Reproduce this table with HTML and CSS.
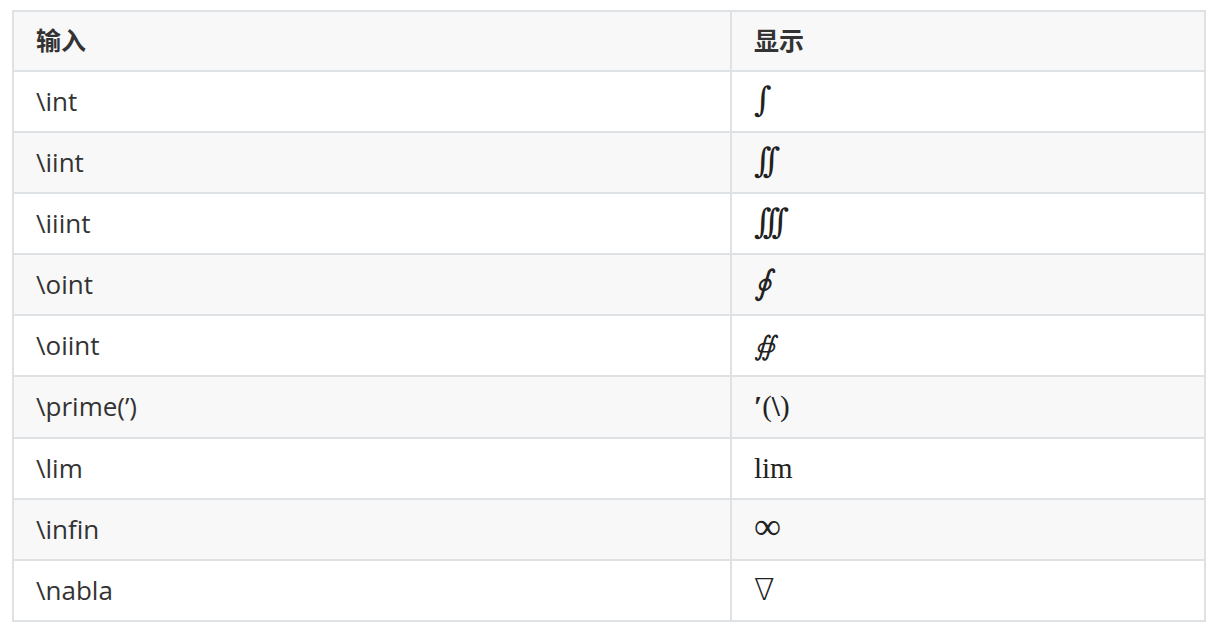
FILE: index.html
```html
<!DOCTYPE html>
<html>
<head>
<meta charset="utf-8">
<link rel="stylesheet" href="styles.css">
</head>
<body>
<table class="sym-table">
  <thead>
    <tr><th class="col-in">输入</th><th>显示</th></tr>
  </thead>
  <tbody>
    <tr><td>\int</td><td><span class="m int">∫</span></td></tr>
    <tr><td>\iint</td><td><span class="m int multi">∫∫</span></td></tr>
    <tr><td>\iiint</td><td><span class="m int multi">∫∫∫</span></td></tr>
    <tr><td>\oint</td><td><span class="m int">∮</span></td></tr>
    <tr><td>\oiint</td><td><span class="m oiint">∯</span></td></tr>
    <tr><td>\prime(’)</td><td><span class="m prime"><span class="pr">′</span>(<span class="inner">\</span>)</span></td></tr>
    <tr><td>\lim</td><td><span class="m lim">lim</span></td></tr>
    <tr><td>\infin</td><td><span class="m inf">∞</span></td></tr>
    <tr><td>\nabla</td><td><span class="m nabla">∇</span></td></tr>
  </tbody>
</table>
</body>
</html>
```
FILE: styles.css
```css
html, body {
  background: #ffffff;
}
body {
  margin: 10px 0 0 12px;
  font-family: "Open Sans", "Noto Sans CJK SC", sans-serif;
  font-size: 26px;
  color: #333333;
}
.sym-table {
  border-collapse: collapse;
  width: 1194px;
}
.sym-table th,
.sym-table td {
  border: 2px solid #dfe2e5;
  padding: 10px 22px;
  text-align: left;
  vertical-align: middle;
}
.sym-table td {
  height: 39.1px;
  line-height: 39.1px;
}
.sym-table th {
  font-family: "Noto Sans CJK SC", sans-serif;
  font-weight: 700;
  font-size: 25px;
  background: #f8f8f8;
  height: 38px;
  line-height: 38px;
  padding-top: 8px;
  padding-bottom: 12px;
}
.col-in {
  width: 672px;
}
.sym-table tbody tr:nth-child(even) td {
  background: #f8f8f8;
}
.m {
  font-family: "DejaVu Serif", "Liberation Serif", serif;
  color: #222222;
  line-height: 0;
}
.int {
  font-size: 34px;
  font-style: italic;
  font-weight: 300;
}
.multi {
  letter-spacing: -9px;
}
.oiint {
  font-size: 27px;
  font-style: italic;
}
.prime {
  font-family: "Liberation Serif", serif;
  font-size: 29px;
}
.pr {
  font-weight: 700;
}
.inner {
  font-weight: 700;
}
.lim {
  font-family: "Liberation Serif", serif;
  font-size: 29px;
}
.inf {
  font-family: "Liberation Serif", serif;
  font-size: 38px;
}
.nabla {
  font-family: "DejaVu Sans", sans-serif;
  font-weight: 200;
  font-size: 30px;
}
```
